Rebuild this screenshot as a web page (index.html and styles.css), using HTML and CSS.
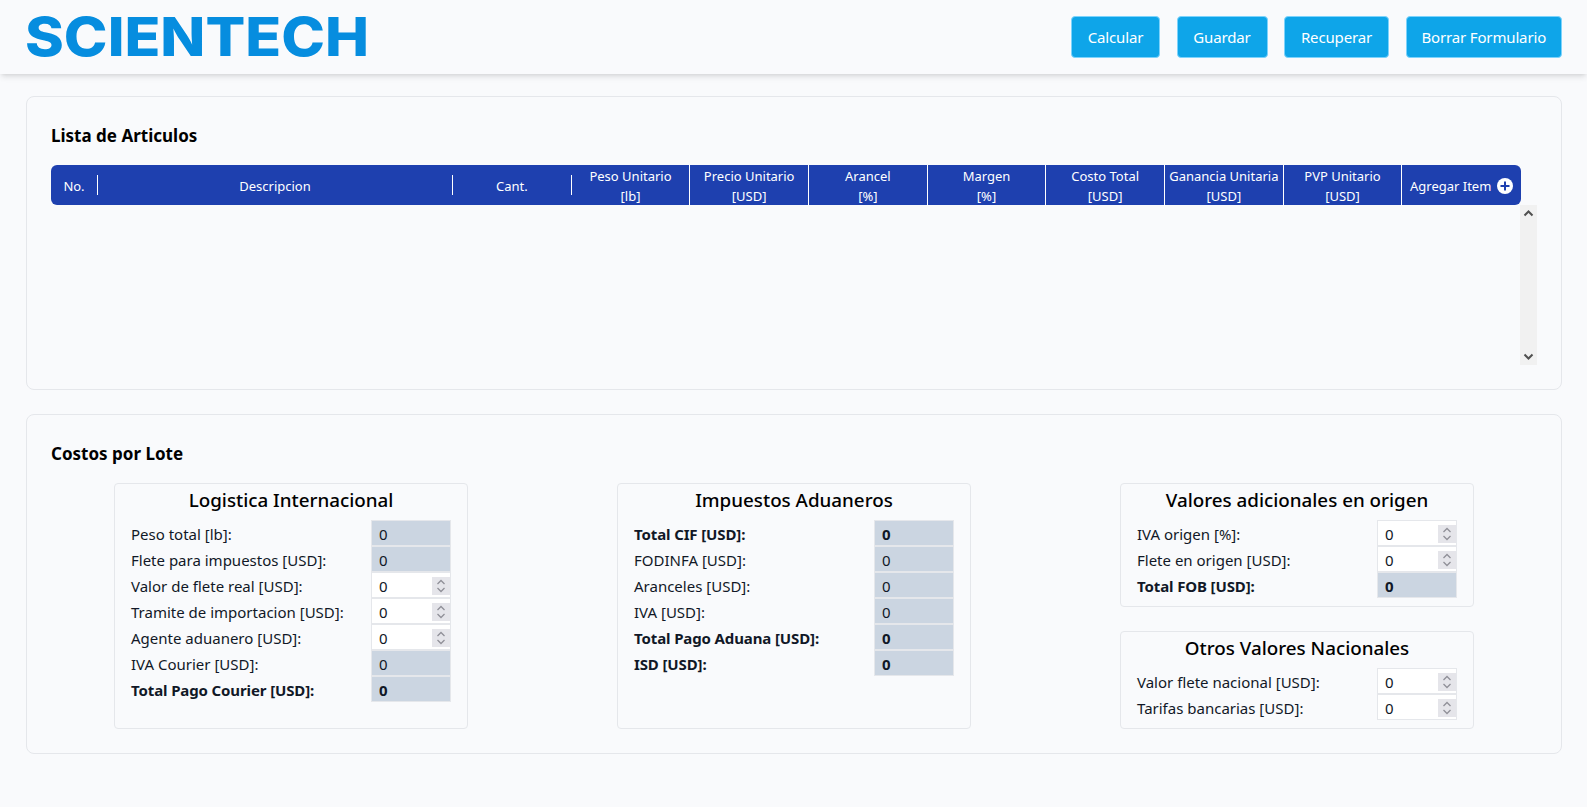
FILE: index.html
```html
<!DOCTYPE html>
<html lang="es">
<head>
  <meta charset="UTF-8">
  <title>Scientech - Costos de Importacion</title>
  <link rel="stylesheet" href="styles.css">
</head>
<body>

<header class="topbar">
  <div class="logo">SCIENTECH</div>
  <nav class="actions">
    <button class="btn">Calcular</button>
    <button class="btn">Guardar</button>
    <button class="btn">Recuperar</button>
    <button class="btn">Borrar Formulario</button>
  </nav>
</header>

<main class="page">
  <section class="card">
    <h2>Lista de Articulos</h2>
    <div class="table-head">
      <div class="cell short">No.</div>
      <div class="cell short">Descripcion</div>
      <div class="cell short">Cant.</div>
      <div class="cell">Peso Unitario<br>[lb]</div>
      <div class="cell">Precio Unitario<br>[USD]</div>
      <div class="cell">Arancel<br>[%]</div>
      <div class="cell">Margen<br>[%]</div>
      <div class="cell">Costo Total<br>[USD]</div>
      <div class="cell">Ganancia Unitaria<br>[USD]</div>
      <div class="cell">PVP Unitario<br>[USD]</div>
      <div class="cell add">
        Agregar Item
        <svg class="plus" viewBox="0 0 16 16" width="16" height="16">
          <circle cx="8" cy="8" r="8" fill="#fff"/>
          <path d="M8 3.5v9M3.5 8h9" stroke="#1e40af" stroke-width="2"/>
        </svg>
      </div>
    </div>
    <div class="table-body">
      <div class="rows"></div>
      <div class="scroll-track">
        <svg viewBox="0 0 17 17" width="17" height="17"><path d="M4.5 10.5 8.5 6.5l4 4" fill="none" stroke="#505050" stroke-width="2"/></svg>
        <svg viewBox="0 0 17 17" width="17" height="17"><path d="M4.5 6.5l4 4 4-4" fill="none" stroke="#505050" stroke-width="2"/></svg>
      </div>
    </div>
  </section>

  <section class="card">
    <h2>Costos por Lote</h2>
    <div class="groups">
      <div class="box">
        <h3>Logistica Internacional</h3>
        <div class="row"><label>Peso total [lb]:</label><input class="calc" type="text" value="0" readonly></div>
        <div class="row"><label>Flete para impuestos [USD]:</label><input class="calc" type="text" value="0" readonly></div>
        <div class="row"><label>Valor de flete real [USD]:</label><input type="number" value="0"></div>
        <div class="row"><label>Tramite de importacion [USD]:</label><input type="number" value="0"></div>
        <div class="row"><label>Agente aduanero [USD]:</label><input type="number" value="0"></div>
        <div class="row"><label>IVA Courier [USD]:</label><input class="calc" type="text" value="0" readonly></div>
        <div class="row total"><label>Total Pago Courier [USD]:</label><input class="calc" type="text" value="0" readonly></div>
      </div>

      <div class="box">
        <h3>Impuestos Aduaneros</h3>
        <div class="row total"><label>Total CIF [USD]:</label><input class="calc" type="text" value="0" readonly></div>
        <div class="row"><label>FODINFA [USD]:</label><input class="calc" type="text" value="0" readonly></div>
        <div class="row"><label>Aranceles [USD]:</label><input class="calc" type="text" value="0" readonly></div>
        <div class="row"><label>IVA [USD]:</label><input class="calc" type="text" value="0" readonly></div>
        <div class="row total"><label>Total Pago Aduana [USD]:</label><input class="calc" type="text" value="0" readonly></div>
        <div class="row total"><label>ISD [USD]:</label><input class="calc" type="text" value="0" readonly></div>
      </div>

      <div class="stack">
        <div class="box">
          <h3>Valores adicionales en origen</h3>
          <div class="row"><label>IVA origen [%]:</label><input type="number" value="0"></div>
          <div class="row"><label>Flete en origen [USD]:</label><input type="number" value="0"></div>
          <div class="row total"><label>Total FOB [USD]:</label><input class="calc" type="text" value="0" readonly></div>
        </div>
        <div class="box">
          <h3>Otros Valores Nacionales</h3>
          <div class="row"><label>Valor flete nacional [USD]:</label><input type="number" value="0"></div>
          <div class="row"><label>Tarifas bancarias [USD]:</label><input type="number" value="0"></div>
        </div>
      </div>
    </div>
  </section>
</main>

</body>
</html>
```

FILE: styles.css
```css
* {
  box-sizing: border-box;
}

body {
  margin: 0;
  min-height: 807px;
  font-family: "Noto Sans", "Open Sans", sans-serif;
  font-size: 15px;
  line-height: 24px;
  color: #111827;
  background: #f9fafc;
}

.topbar {
  height: 74px;
  padding: 0 25px 0 25px;
  display: flex;
  align-items: center;
  justify-content: space-between;
  box-shadow: 0 4px 6px -1px rgba(0,0,0,0.1), 0 2px 4px -2px rgba(0,0,0,0.1);
}

.logo {
  font-family: Inter, sans-serif;
  font-weight: 800;
  font-size: 54px;
  line-height: 54px;
  color: #068ddf;
  transform: scaleX(1.09);
  transform-origin: left center;
}

.actions {
  display: grid;
  grid-template-columns: 89px 91px 105px 156.5px;
  gap: 16.5px;
}

.btn {
  height: 42px;
  padding: 0;
  font: inherit;
  letter-spacing: -0.15px;
  color: #fff;
  background: #0ea5e9;
  border: 1px solid #7dd3fc;
  border-radius: 4px;
}

.page {
  padding: 22px 25px 0 26px;
  display: flex;
  flex-direction: column;
  gap: 24px;
}

.card {
  padding: 24px;
  border: 1px solid #e5e7eb;
  border-radius: 8px;
}

h2 {
  margin: 0 0 16px;
  padding-top: 1px;
  font-size: 17px;
  line-height: 28px;
  height: 28px;
  font-weight: 700;
  color: #000;
}

.table-head {
  height: 40px;
  margin-right: 16px;
  display: grid;
  grid-template-columns: 47px 355px repeat(9, 1fr);
  font-size: 13px;
  line-height: 20px;
  color: #fff;
  background: #1e40af;
  border-radius: 6px;
}

.cell {
  padding-top: 1px;
  text-align: center;
  white-space: nowrap;
  border-right: 1px solid #fff;
}

.cell.short {
  height: 20px;
  margin-top: 10px;
}

.cell.add {
  border-right: 0;
  display: flex;
  align-items: center;
  justify-content: center;
  gap: 6px;
}

.table-body {
  height: 160px;
  display: flex;
}

.rows {
  flex: 1;
}

.scroll-track {
  width: 17px;
  display: flex;
  flex-direction: column;
  justify-content: space-between;
  background: #f1f1f1;
}

.groups {
  padding: 0 63px;
  display: grid;
  grid-template-columns: repeat(3, 354px);
  justify-content: space-between;
}

.stack {
  display: flex;
  flex-direction: column;
  gap: 24px;
}

.box {
  padding: 0 16px 8px;
  border: 1px solid #e5e7eb;
  border-radius: 4px;
}

h3 {
  margin: 0;
  padding: 2px 0 6px;
  font-size: 18.8px;
  line-height: 28px;
  font-weight: 500;
  text-align: center;
  color: #000;
}

.row {
  height: 26px;
  display: flex;
  align-items: center;
  justify-content: space-between;
}

.row label {
  padding-top: 2px;
}

.row input {
  width: 80px;
  height: 26px;
  padding: 2px 0 0 7px;
  font: inherit;
  color: #111827;
  background: #fff;
  border: 1px solid #e5e7eb;
  border-radius: 0;
  outline: none;
}

.row input.calc {
  background: #cbd5e1;
}

/* spinner drawn to look like the windows one, always visible */
.row input::-webkit-inner-spin-button {
  -webkit-appearance: none;
  opacity: 1;
  width: 18px;
  height: 18px;
  margin-top: 1px;
  background: #e5e5ea url("data:image/svg+xml,%3Csvg xmlns='http://www.w3.org/2000/svg' width='18' height='18'%3E%3Cpath d='M5.5 7 9 3.5 12.500 7M5.500 11 9 14.500 12.500 11' fill='none' stroke='%23909098' stroke-width='1.300'/%3E%3C/svg%3E") no-repeat center;
}

.row.total {
  font-weight: 700;
  letter-spacing: -0.12px;
}
```
